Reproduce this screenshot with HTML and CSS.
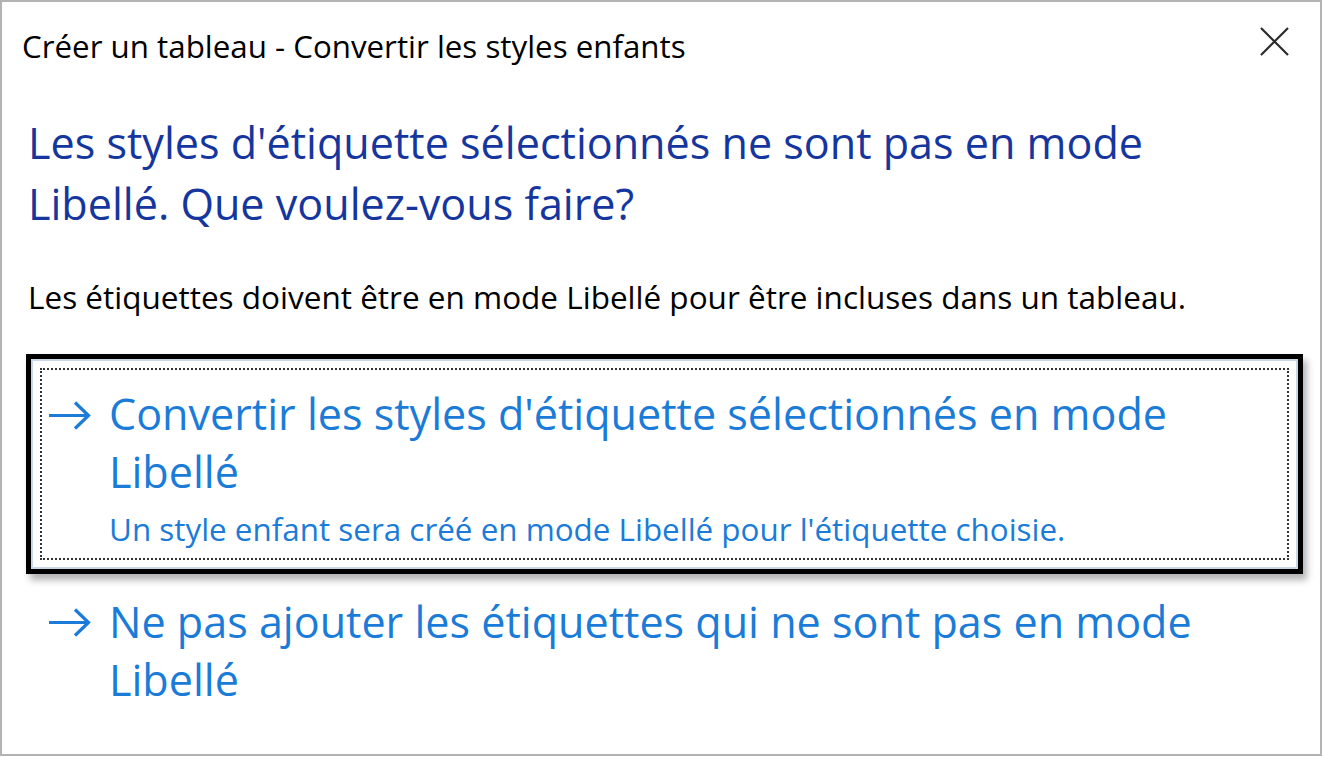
FILE: index.html
```html
<!DOCTYPE html>
<html lang="fr">
<head>
<meta charset="utf-8">
<title>Créer un tableau - Convertir les styles enfants</title>
<link rel="stylesheet" href="styles.css">
</head>
<body>
<div class="dialog">
  <div class="titlebar">
    <span class="title">Créer un tableau - Convertir les styles enfants</span>
    <svg class="close" width="29" height="29" viewBox="0 0 29 29" aria-hidden="true">
      <path d="M1 1 L28 28 M28 1 L1 28" stroke="#2b2b2b" stroke-width="2.2" fill="none"/>
    </svg>
  </div>
  <div class="content">
    <h1 class="instruction">Les styles d'étiquette sélectionnés ne sont pas en mode Libellé. Que voulez-vous faire?</h1>
    <p class="desc">Les étiquettes doivent être en mode Libellé pour être incluses dans un tableau.</p>
    <div class="links">
      <div class="cmd selected">
        <div class="focus">
          <svg class="arrow" width="43" height="29" viewBox="0 0 43 29" aria-hidden="true">
            <path d="M1 14.5 H40 M27 1.5 L40.5 14.5 L27 27.5" stroke="currentColor" stroke-width="3.2" fill="none"/>
          </svg>
          <div class="cmd-text">
            <div class="cmd-main">Convertir les styles d'étiquette sélectionnés en mode Libellé</div>
            <div class="cmd-note">Un style enfant sera créé en mode Libellé pour l'étiquette choisie.</div>
          </div>
        </div>
      </div>
      <div class="cmd plain">
        <div class="focus">
          <svg class="arrow" width="43" height="29" viewBox="0 0 43 29" aria-hidden="true">
            <path d="M1 14.5 H40 M27 1.5 L40.5 14.5 L27 27.5" stroke="currentColor" stroke-width="3.2" fill="none"/>
          </svg>
          <div class="cmd-text">
            <div class="cmd-main">Ne pas ajouter les étiquettes qui ne sont pas en mode Libellé</div>
          </div>
        </div>
      </div>
    </div>
  </div>
</div>
</body>
</html>
```
FILE: styles.css
```css
* { box-sizing: border-box; }
html, body { margin: 0; padding: 0; background: #ffffff; }
body { font-family: "Open Sans", "Noto Sans", "DejaVu Sans", sans-serif; color: #000; }

.dialog {
  width: 1322px;
  height: 756px;
  border: 2px solid #b3b3b3;
  background: #ffffff;
}

.titlebar {
  height: 110px;
  display: flex;
  justify-content: space-between;
  align-items: flex-start;
  padding: 26px 31px 0 20px;
}
.title {
  font-size: 31.3px;
  line-height: 36px;
  color: #000;
}
.close { margin-top: -1px; display: block; }

.content { padding: 0 17px 0 26px; }

.instruction {
  margin: 0;
  max-width: 1200px;
  font-weight: normal;
  font-size: 43.1px;
  line-height: 61px;
  color: #15369e;
}
.desc {
  margin: 45px 0 0 0;
  font-size: 31.5px;
  line-height: 36px;
  color: #000;
}

.links { margin: 39px 0 0 -2px; }

.cmd { color: #1a7cd8; }

.focus {
  display: flex;
  align-items: flex-start;
}

.cmd.selected {
  border: 5px solid #000;
  box-shadow: 4px 6px 7px rgba(0, 0, 0, 0.3);
}
.cmd.selected .focus {
  position: relative;
  border: 2px solid #c8d6e6;
  padding: 24px 20px 20px 15px;
}
.cmd.selected .focus::before {
  content: "";
  position: absolute;
  inset: 7px;
  border: 2px dotted #333333;
  pointer-events: none;
}
.cmd.selected .arrow { margin-top: 16px; }

.cmd.plain .focus { padding: 19px 0 0 22px; }
.cmd.plain .arrow { margin-top: 15px; }

.arrow { display: block; flex: none; color: #1a7cd8; }

.cmd-text { margin-left: 18px; }

.cmd-main {
  max-width: 1120px;
  font-size: 43.1px;
  line-height: 58px;
}
.cmd-note {
  margin-top: 10px;
  font-size: 31.4px;
  line-height: 36px;
}
```
